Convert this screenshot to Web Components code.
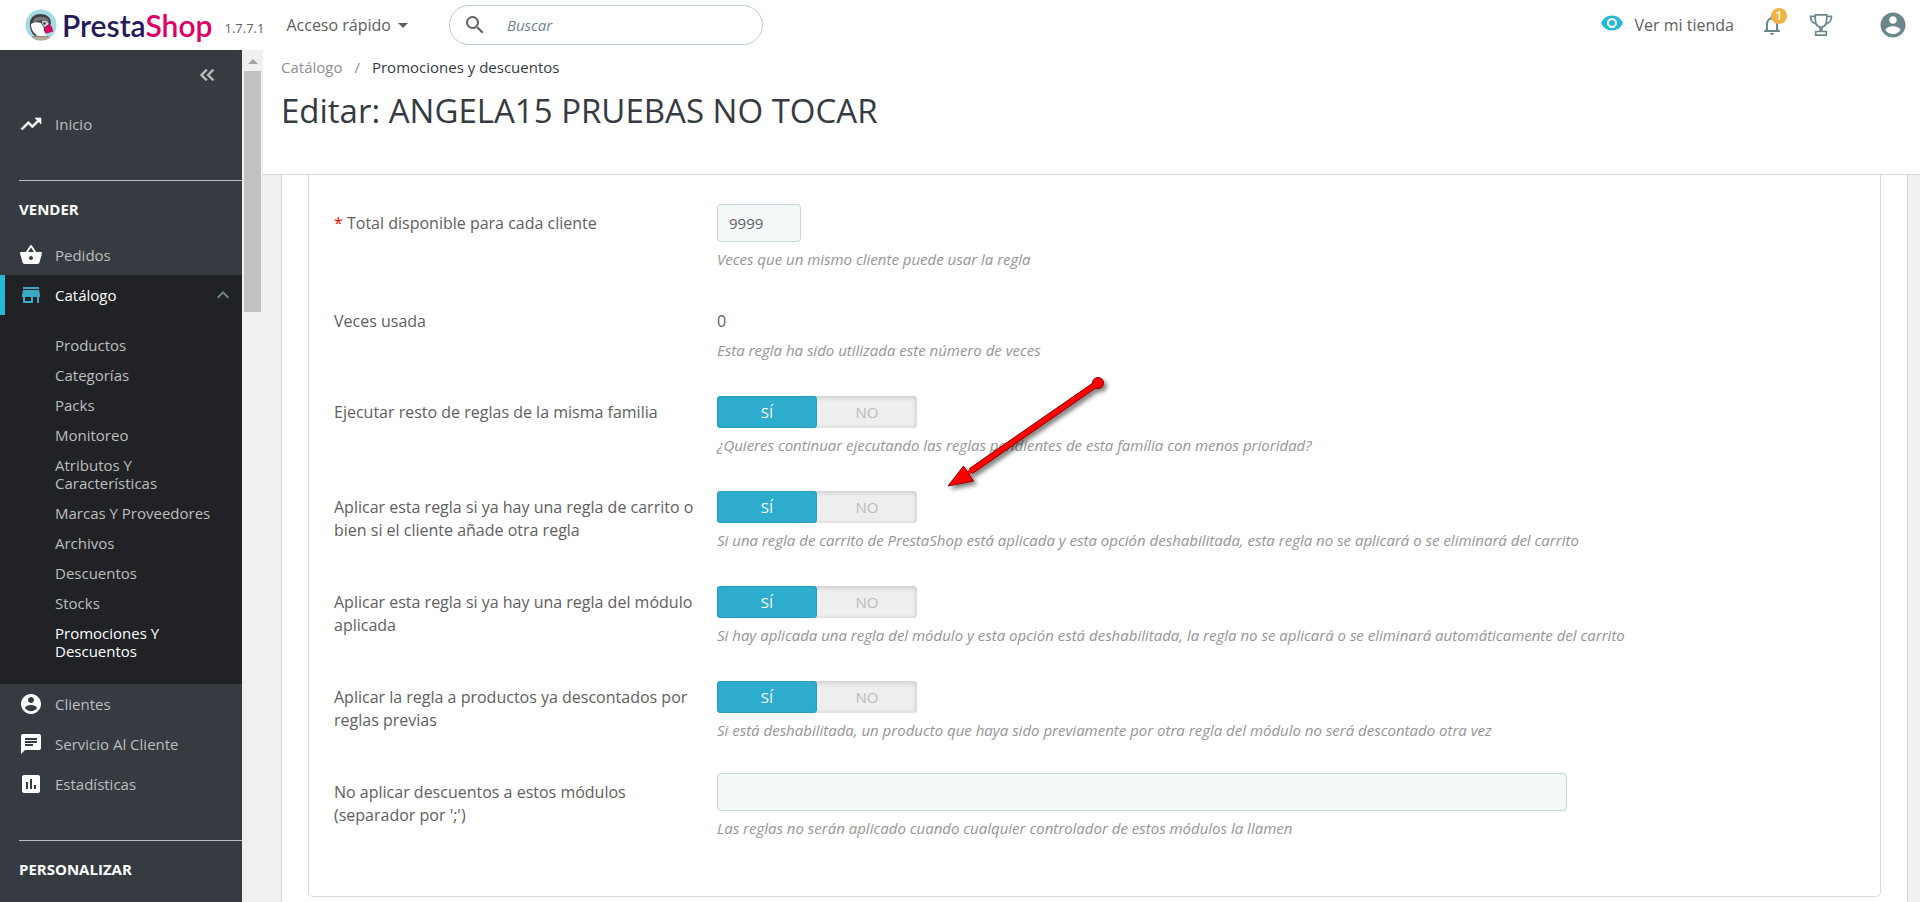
<!DOCTYPE html>
<html lang="es">
<head>
<meta charset="utf-8">
<title>Editar: ANGELA15 PRUEBAS NO TOCAR</title>
<style>
    html, body {
        height: 100%;
        margin: 0;
    }
    body {
        display: flex;
        flex-direction: column;
        overflow: hidden;
        background: #eff1f2;
        color: #606060;
        font-family: "Open Sans", "Noto Sans", sans-serif;
        font-size: 16px;
    }
    .layout {
        flex: 1;
        min-height: 0;
        display: flex;
    }
    .content {
        flex: 1;
        min-width: 0;
        display: flex;
        flex-direction: column;
    }
</style>
</head>
<body>
<top-bar version="1.7.7.1"></top-bar>
<div class="layout">
    <side-menu>
        <menu-link icon="trend">Inicio</menu-link>
        <menu-title>Vender</menu-title>
        <menu-link icon="basket">Pedidos</menu-link>
        <menu-link icon="store" open>Catálogo
            <sub-link slot="sub">Productos</sub-link>
            <sub-link slot="sub">Categorías</sub-link>
            <sub-link slot="sub">Packs</sub-link>
            <sub-link slot="sub">Monitoreo</sub-link>
            <sub-link slot="sub">Atributos Y Características</sub-link>
            <sub-link slot="sub">Marcas Y Proveedores</sub-link>
            <sub-link slot="sub">Archivos</sub-link>
            <sub-link slot="sub">Descuentos</sub-link>
            <sub-link slot="sub">Stocks</sub-link>
            <sub-link slot="sub" active>Promociones Y Descuentos</sub-link>
        </menu-link>
        <menu-link icon="account">Clientes</menu-link>
        <menu-link icon="chat">Servicio Al Cliente</menu-link>
        <menu-link icon="stats">Estadísticas</menu-link>
        <menu-title>Personalizar</menu-title>
    </side-menu>
    <scroll-track></scroll-track>
    <div class="content">
        <page-head section="Catálogo" current="Promociones y descuentos">Editar: ANGELA15 PRUEBAS NO TOCAR</page-head>
        <form-panel>
            <form-row type="number" required value="9999" label="Total disponible para cada cliente" help="Veces que un mismo cliente puede usar la regla"></form-row>
            <form-row type="static" value="0" label="Veces usada" help="Esta regla ha sido utilizada este número de veces"></form-row>
            <form-row type="switch" label="Ejecutar resto de reglas de la misma familia" help="¿Quieres continuar ejecutando las reglas pendientes de esta família con menos prioridad?"></form-row>
            <form-row type="switch" label="Aplicar esta regla si ya hay una regla de carrito o bien si el cliente añade otra regla" help="Si una regla de carrito de PrestaShop está aplicada y esta opción deshabilitada, esta regla no se aplicará o se eliminará del carrito"></form-row>
            <form-row type="switch" label="Aplicar esta regla si ya hay una regla del módulo aplicada" help="Si hay aplicada una regla del módulo y esta opción está deshabilitada, la regla no se aplicará o se eliminará automáticamente del carrito"></form-row>
            <form-row type="switch" label="Aplicar la regla a productos ya descontados por reglas previas" help="Si está deshabilitada, un producto que haya sido previamente por otra regla del módulo no será descontado otra vez"></form-row>
            <form-row type="text" value="" label="No aplicar descuentos a estos módulos (separador por ';')" help="Las reglas no serán aplicado cuando cualquier controlador de estos módulos la llamen"></form-row>
            <red-arrow slot="note"></red-arrow>
        </form-panel>
    </div>
</div>

<script>
const ICONS = {
    trend: '<path d="M16 6l2.29 2.29-4.88 4.88-4-4L2 16.59 3.41 18l6-6 4 4 6.3-6.29L22 12V6z" stroke="currentColor" stroke-width=".6"/>',
    basket: '<path d="M17.21 9l-4.38-6.56a.99.99 0 0 0-1.66.01L6.79 9H2c-.55 0-1 .45-1 1 0 .09.01.18.04.27l2.54 9.27c.23.84 1 1.46 1.92 1.46h13c.92 0 1.69-.62 1.93-1.46l2.54-9.27L23 10c0-.55-.45-1-1-1h-4.79zM9 9l3-4.4L15 9H9zm3 8c-1.1 0-2-.9-2-2s.9-2 2-2 2 .9 2 2-.9 2-2 2z"/>',
    store: '<path d="M20 4H4v2h16V4zm1 10v-2l-1-5H4l-1 5v2h1v6h10v-6h4v6h2v-6h1zm-9 4H6v-4h6v4z"/>',
    account: '<path d="M12 2C6.48 2 2 6.48 2 12s4.48 10 10 10 10-4.48 10-10S17.52 2 12 2zm0 3c1.66 0 3 1.34 3 3s-1.34 3-3 3-3-1.34-3-3 1.34-3 3-3zm0 14.2c-2.5 0-4.71-1.28-6-3.22.03-1.99 4-3.08 6-3.08 1.99 0 5.97 1.09 6 3.08-1.29 1.94-3.5 3.22-6 3.22z"/>',
    chat: '<path d="M20 2H4c-1.1 0-1.99.9-1.99 2L2 22l4-4h14c1.1 0 2-.9 2-2V4c0-1.1-.9-2-2-2zM6 9h12v2H6V9zm8 5H6v-2h8v2zm4-6H6V6h12v2z"/>',
    stats: '<path d="M19 3H5c-1.1 0-2 .9-2 2v14c0 1.1.9 2 2 2h14c1.1 0 2-.9 2-2V5c0-1.1-.9-2-2-2zM9 17H7v-7h2v7zm4 0h-2V7h2v10zm4 0h-2v-4h2v4z"/>',
    search: '<path d="M15.5 14h-.79l-.28-.27A6.471 6.471 0 0 0 16 9.5 6.5 6.5 0 1 0 9.5 16c1.61 0 3.09-.59 4.23-1.57l.27.28v.79l5 4.99L20.49 19l-4.99-5zm-6 0C7.01 14 5 11.99 5 9.5S7.01 5 9.5 5 14 7.01 14 9.5 11.99 14 9.5 14z"/>',
    eye: '<path d="M12 4.5C7 4.5 2.73 7.61 1 12c1.73 4.39 6 7.5 11 7.5s9.27-3.11 11-7.5c-1.73-4.39-6-7.5-11-7.5zM12 17c-2.76 0-5-2.24-5-5s2.24-5 5-5 5 2.24 5 5-2.24 5-5 5zm0-8c-1.66 0-3 1.34-3 3s1.34 3 3 3 3-1.34 3-3-1.34-3-3-3z"/>',
    bell: '<path d="M12 22c1.1 0 2-.9 2-2h-4c0 1.1.9 2 2 2zm6-6v-5c0-3.07-1.63-5.64-4.5-6.32V4c0-.83-.67-1.5-1.5-1.5s-1.5.67-1.5 1.5v.68C7.64 5.36 6 7.92 6 11v5l-2 2v1h16v-1l-2-2zm-2 1H8v-6c0-2.48 1.51-4.5 4-4.5s4 2.02 4 4.5v6z"/>',
    trophy: '<g fill="none" stroke="currentColor" stroke-width="1.7"><path d="M6.3 1.800h11.400v4.700c0 4-1.700 7.500-5.700 7.500s-5.700-3.500-5.700-7.500z"/><path d="M6.3 3.400H1.500c0 3.800 2 6.400 5.600 7.600M17.700 3.400h4.800c0 3.800-2 6.400-5.600 7.600M10.300 14l.9 2v2.500M13.700 14l-.9 2v2.500M6.700 18.500h10.600v3.700H6.700z"/></g>',
    up: '<path d="M7.410 15.410 12 10.830l4.590 4.580L18 14l-6-6-6 6z"/>',
    collapse: '<path d="M17.590 18 19 16.590 14.420 12 19 7.410 17.590 6l-6 6zM11 18l1.410-1.410L7.830 12l4.580-4.590L11 6l-6 6z" stroke="currentColor" stroke-width=".4"/>',
};

const icon = (name, size) =>
    `<svg viewBox="0 0 24 24" width="${size}" height="${size}" fill="currentColor" aria-hidden="true">${ICONS[name]}</svg>`;

class BaseElement extends HTMLElement {
    constructor() {
        super();
        this.shadowDOM = this.attachShadow({mode: "open"});
    }

    connectedCallback() {
        this.shadowDOM.innerHTML = `
            <style>
                :host, * {
                    box-sizing: border-box;
                }
                svg {
                    display: block;
                    flex: none;
                }
                a {
                    color: inherit;
                    text-decoration: none;
                }
                button, input {
                    font: inherit;
                    color: inherit;
                }
                button {
                    padding: 0;
                    border: 0;
                    background: none;
                    cursor: pointer;
                }
            </style>${this.render()}`;
    }
}

class ShopLogo extends BaseElement {
    render() {
        return `
            <style>
                :host {
                    display: block;
                }
                a {
                    display: flex;
                    align-items: center;
                    gap: 5px;
                    color: #251b5b;
                    font: 600 30px/32px Lato, sans-serif;
                }
                b {
                    color: #df0067;
                    font-weight: inherit;
                }
            </style>
            <a href="#">
                <svg viewBox="0 0 32 32" width="32" height="32" aria-hidden="true">
                    <clipPath id="disc"><circle cx="16" cy="16" r="15.500"/></clipPath>
                    <g clip-path="url(#disc)">
                        <path fill="#a4dbe2" d="M0 0h32v32H0z"/>
                        <path fill="#3f4147" d="M5 17C4 10 8 5 15 5c6 0 11 3 11 9l-2 6-14 7C7 25 5 21 5 17z"/>
                        <path fill="#77767b" d="M9 10c4-3 10-3 14 0l1 3c-5-3-11-2-16 1z"/>
                        <path fill="#fff" d="M6 15c3-2 7-2 10-1l3 5c-1 4 1 6 3 8-8 2-16-2-16-12z"/>
                        <path fill="#d8d4d3" d="M17 12c3-1 6 0 7 3l-4 3c-2-1-3-3-3-6z"/>
                        <circle cx="19.500" cy="14.500" r="1.300" fill="#33323c"/>
                        <path fill="#df0067" d="M21 18c1-2 3-3 4-2 2 1 3 4 3 7-2-1-3 1-5 1-2 1-3 0-3-1 0-2 0-3 1-5z"/>
                        <path fill="#b7a99b" d="M7 27h18v5H7z"/>
                        <path fill="#8c7f78" d="M8 27h15v1H8z"/>
                    </g>
                </svg>
                <span>Presta<b>Shop</b></span>
            </a>`;
    }
}

class TopBar extends BaseElement {
    render() {
        return `
            <style>
                :host {
                    display: flex;
                    align-items: center;
                    height: 50px;
                    padding: 0 12px 0 25px;
                    background: #fff;
                }
                .version {
                    margin: 5px 22px 0 12px;
                    font-size: 13px;
                }
                .quick {
                    display: flex;
                    align-items: center;
                    gap: 7px;
                    margin-right: 41px;
                }
                .quick::after {
                    content: "";
                    border: 5px solid transparent;
                    border-top-color: currentColor;
                    border-bottom: 0;
                }
                .search {
                    display: flex;
                    align-items: center;
                    gap: 20px;
                    width: 314px;
                    height: 40px;
                    padding: 0 13px;
                    border: 1px solid #bbcdd2;
                    border-radius: 20px;
                }
                .search input {
                    flex: 1;
                    min-width: 0;
                    padding: 0;
                    border: 0;
                    outline: 0;
                    background: none;
                    font-size: 15px;
                }
                .search input::placeholder {
                    color: #6c868e;
                    font-style: italic;
                    opacity: 1;
                }
                .view {
                    display: flex;
                    align-items: center;
                    gap: 11px;
                    margin-left: auto;
                }
                .view svg {
                    color: #25b9d7;
                    margin-bottom: 4px;
                }
                .tools {
                    display: flex;
                    align-items: center;
                    color: #6c868e;
                    margin-left: 26px;
                }
                .bell {
                    position: relative;
                    margin-right: 25px;
                }
                .account {
                    margin-left: 45px;
                }
                .badge {
                    position: absolute;
                    top: -5px;
                    right: -3px;
                    width: 16px;
                    border-radius: 8px;
                    background: #f1b340;
                    color: #fff;
                    font: 600 12px/16px "Open Sans", sans-serif;
                }
            </style>
            <shop-logo></shop-logo>
            <span class="version">${this.getAttribute("version")}</span>
            <button class="quick" type="button">Acceso rápido</button>
            <label class="search">${icon("search", 24)}<input type="search" placeholder="Buscar" aria-label="Buscar"></label>
            <a class="view" href="#">${icon("eye", 24)}Ver mi tienda</a>
            <div class="tools">
                <button class="bell" type="button" aria-label="Notificaciones">${icon("bell", 24)}<span class="badge">1</span></button>
                <button type="button" aria-label="Logros">${icon("trophy", 24)}</button>
                <button class="account" type="button" aria-label="Cuenta">${icon("account", 30)}</button>
            </div>`;
    }
}

class SideMenu extends BaseElement {
    render() {
        return `
            <style>
                :host {
                    display: block;
                    flex: none;
                    width: 242px;
                    overflow: hidden;
                    background: #363a41;
                    color: #bebebe;
                    font-size: 15px;
                }
                button {
                    display: block;
                    margin: 13px 23px 17px auto;
                }
            </style>
            <button type="button" aria-label="Contraer menú">${icon("collapse", 24)}</button>
            <nav><slot></slot></nav>`;
    }
}

class MenuTitle extends BaseElement {
    render() {
        return `
            <style>
                :host {
                    display: block;
                    margin: 36px 0 16px 19px;
                    padding-top: 18px;
                    border-top: 1px solid #bebebe;
                    color: #fff;
                    font-weight: 700;
                    line-height: 20px;
                    text-transform: uppercase;
                }
            </style>
            <slot></slot>`;
    }
}

class MenuLink extends BaseElement {
    render() {
        const open = this.hasAttribute("open");
        return `
            <style>
                :host {
                    display: block;
                }
                :host([open]) {
                    background: #202226;
                }
                a {
                    display: flex;
                    align-items: center;
                    gap: 12px;
                    height: 40px;
                    padding: 0 7px 0 19px;
                }
                a svg:first-child {
                    color: #fff;
                }
                :host([open]) a {
                    padding-left: 14px;
                    border-left: 5px solid #25b9d7;
                    color: #fff;
                }
                :host([open]) a svg:first-child {
                    color: #3ca9c4;
                }
                :host([open]) a svg:last-child {
                    margin-left: auto;
                    color: #6c868e;
                }
                .sub {
                    padding: 15px 10px 18px 55px;
                }
            </style>
            <a href="#">${icon(this.getAttribute("icon"), 24)}<span><slot></slot></span>${open ? icon("up", 24) : ""}</a>
            ${open ? '<div class="sub"><slot name="sub"></slot></div>' : ""}`;
    }
}

class SubLink extends BaseElement {
    render() {
        return `
            <style>
                :host {
                    display: block;
                }
                a {
                    display: block;
                    max-width: 160px;
                    padding: 6px 0;
                    line-height: 18px;
                }
                :host([active]) a {
                    color: #fff;
                }
            </style>
            <a href="#"><slot></slot></a>`;
    }
}

class ScrollTrack extends BaseElement {
    render() {
        return `
            <style>
                :host {
                    display: flex;
                    flex-direction: column;
                    align-items: center;
                    flex: none;
                    width: 21px;
                    background: #f0f0f0;
                }
                i {
                    margin: 9px 0 7px;
                    border: 5px solid transparent;
                    border-bottom-color: #a3a3a3;
                    border-top: 0;
                }
                div {
                    width: 17px;
                    height: 241px;
                    background: #c1c1c1;
                }
            </style>
            <i></i><div></div>`;
    }
}

class PageHead extends BaseElement {
    render() {
        return `
            <style>
                :host {
                    display: block;
                    flex: none;
                    height: 125px;
                    padding: 6px 18px 0;
                    border-bottom: 1px solid #d3d8db;
                    background: #fff;
                }
                nav {
                    display: flex;
                    gap: 12px;
                    color: #363a41;
                    font-size: 15px;
                    line-height: 22px;
                }
                nav a, nav span {
                    color: #8f8f8f;
                }
                h1 {
                    margin: 10px 0 0;
                    color: #363a41;
                    font-size: 33px;
                    font-weight: 400;
                    line-height: 46px;
                }
            </style>
            <nav><a href="#">${this.getAttribute("section")}</a><span>/</span>${this.getAttribute("current")}</nav>
            <h1><slot></slot></h1>`;
    }
}

class FormPanel extends BaseElement {
    render() {
        return `
            <style>
                :host {
                    display: block;
                    flex: 1;
                    padding: 0 12px 0 18px;
                }
                .panel {
                    height: 100%;
                    padding: 0 26px;
                    border: solid #d3d8db;
                    border-width: 0 1px;
                    background: #fff;
                }
                form {
                    position: relative;
                    padding: 29px 14px 25px 25px;
                    border: 1px solid #d9dbde;
                    border-top: 0;
                    border-radius: 0 0 5px 5px;
                }
            </style>
            <div class="panel"><form><slot></slot><slot name="note"></slot></form></div>`;
    }
}

class FormRow extends BaseElement {
    control() {
        const value = this.getAttribute("value");
        switch (this.getAttribute("type")) {
            case "static":
                return `<output id="field">${value}</output>`;
            case "switch":
                return `
                    <div class="switch" role="radiogroup" aria-labelledby="label">
                        <label><input type="radio" name="choice" checked><span>SÍ</span></label>
                        <label><input type="radio" name="choice"><span>NO</span></label>
                    </div>`;
            case "number":
                return `<input class="box short" id="field" type="text" inputmode="numeric" value="${value}">`;
            default:
                return `<input class="box" id="field" type="text" value="${value}">`;
        }
    }

    render() {
        const label = this.getAttribute("label");
        return `
            <style>
                :host {
                    display: grid;
                    grid-template-columns: 1fr 3fr;
                    margin-bottom: 31px;
                    font-size: 16px;
                    line-height: 24px;
                }
                .label {
                    padding: 8px 10px 0 0;
                    line-height: 23px;
                }
                :host([required]) .label::before {
                    content: "* ";
                    color: #f00;
                }
                .box {
                    display: block;
                    width: 74%;
                    height: 38px;
                    padding: 0 11px;
                    border: 1px solid #c7d6db;
                    border-radius: 4px;
                    background: #f5f8f9;
                    font-size: 15px;
                }
                .short {
                    width: 84px;
                }
                output {
                    display: block;
                    padding-top: 7px;
                }
                .switch {
                    display: flex;
                    width: 200px;
                    margin-top: 3px;
                    border-radius: 4px;
                    background: #eee;
                    box-shadow: inset 0 1px 4px 1px #ccc;
                    color: #bbb;
                }
                .switch label {
                    flex: 1;
                    position: relative;
                    text-align: center;
                    line-height: 32px;
                }
                .switch input {
                    position: absolute;
                    inset: 0;
                    margin: 0;
                    opacity: 0;
                }
                .switch span {
                    display: block;
                    border-radius: 4px;
                    font-size: 15px;
                }
                .switch input:checked + span {
                    background: #2eacce;
                    box-shadow: inset 0 0 0 1px #2a9dbc;
                    color: #fff;
                }
                .help {
                    margin: 5px 0 0;
                    color: #959595;
                    font-size: 15px;
                    font-style: italic;
                }
            </style>
            ${this.getAttribute("type") === "switch"
                ? `<div class="label" id="label">${label}</div>`
                : `<label class="label" for="field">${label}</label>`}
            <div>
                ${this.control()}
                <p class="help">${this.getAttribute("help")}</p>
            </div>`;
    }
}

class RedArrow extends BaseElement {
    render() {
        return `
            <style>
                :host {
                    position: absolute;
                    left: 630px;
                    top: 195px;
                    pointer-events: none;
                }
            </style>
            <svg width="180" height="130" viewBox="0 0 180 130" aria-hidden="true">
                <g filter="drop-shadow(3px 3px 2px rgba(0, 0, 0, .5))" fill="#f00" stroke="#8c0000">
                    <path d="M157.500 10.500 30.500 98.500l3 5L161 15z"/>
                    <path d="M9 116 24.500 96l10 15z"/>
                    <circle cx="159" cy="13" r="5.500"/>
                    <path stroke="none" d="M156.500 12 28 101.200l3 3L160 15z"/>
                </g>
            </svg>`;
    }
}

customElements.define("shop-logo", ShopLogo);
customElements.define("top-bar", TopBar);
customElements.define("side-menu", SideMenu);
customElements.define("menu-title", MenuTitle);
customElements.define("menu-link", MenuLink);
customElements.define("sub-link", SubLink);
customElements.define("scroll-track", ScrollTrack);
customElements.define("page-head", PageHead);
customElements.define("form-panel", FormPanel);
customElements.define("form-row", FormRow);
customElements.define("red-arrow", RedArrow);
</script>
</body>
</html>
